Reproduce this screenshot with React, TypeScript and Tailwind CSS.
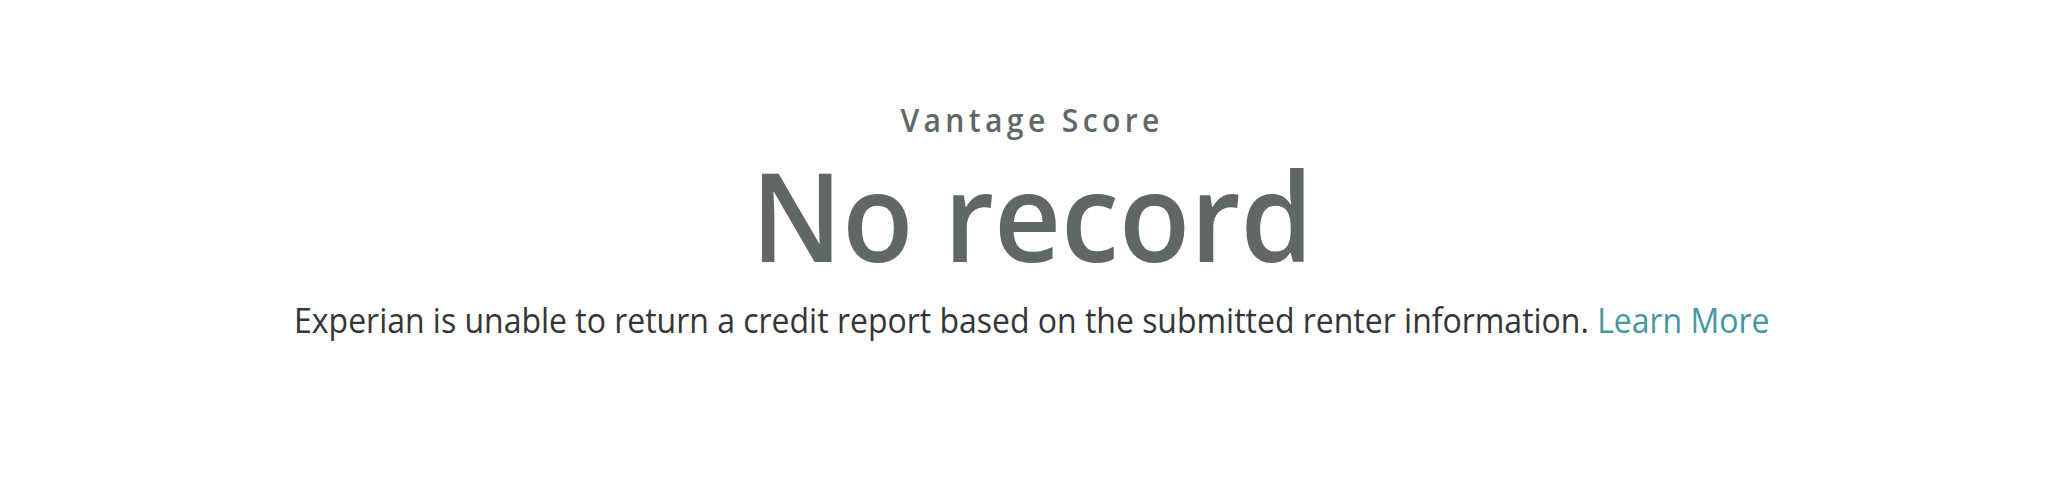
export default function App() {
  return (
    <div className="flex h-[504px] w-full flex-col items-center bg-white pt-[100px] font-['Open_Sans',sans-serif]">
      <p className="scale-x-[0.94] text-[32px] font-semibold leading-[40px] tracking-[0.145em] text-[#606767]">
        Vantage Score
      </p>
      <h1 className="mt-[9px] scale-x-[0.94] text-[124px] font-semibold leading-[130px] text-[#606767]">
        No record
      </h1>
      <p className="mt-[19px] scale-x-[0.94] text-[34px] leading-[44px] text-[#333536]">
        Experian is unable to return a credit report based on the submitted renter information.{' '}
        <a href="#" className="text-[#4596a0]">
          Learn More
        </a>
      </p>
    </div>
  )
}
